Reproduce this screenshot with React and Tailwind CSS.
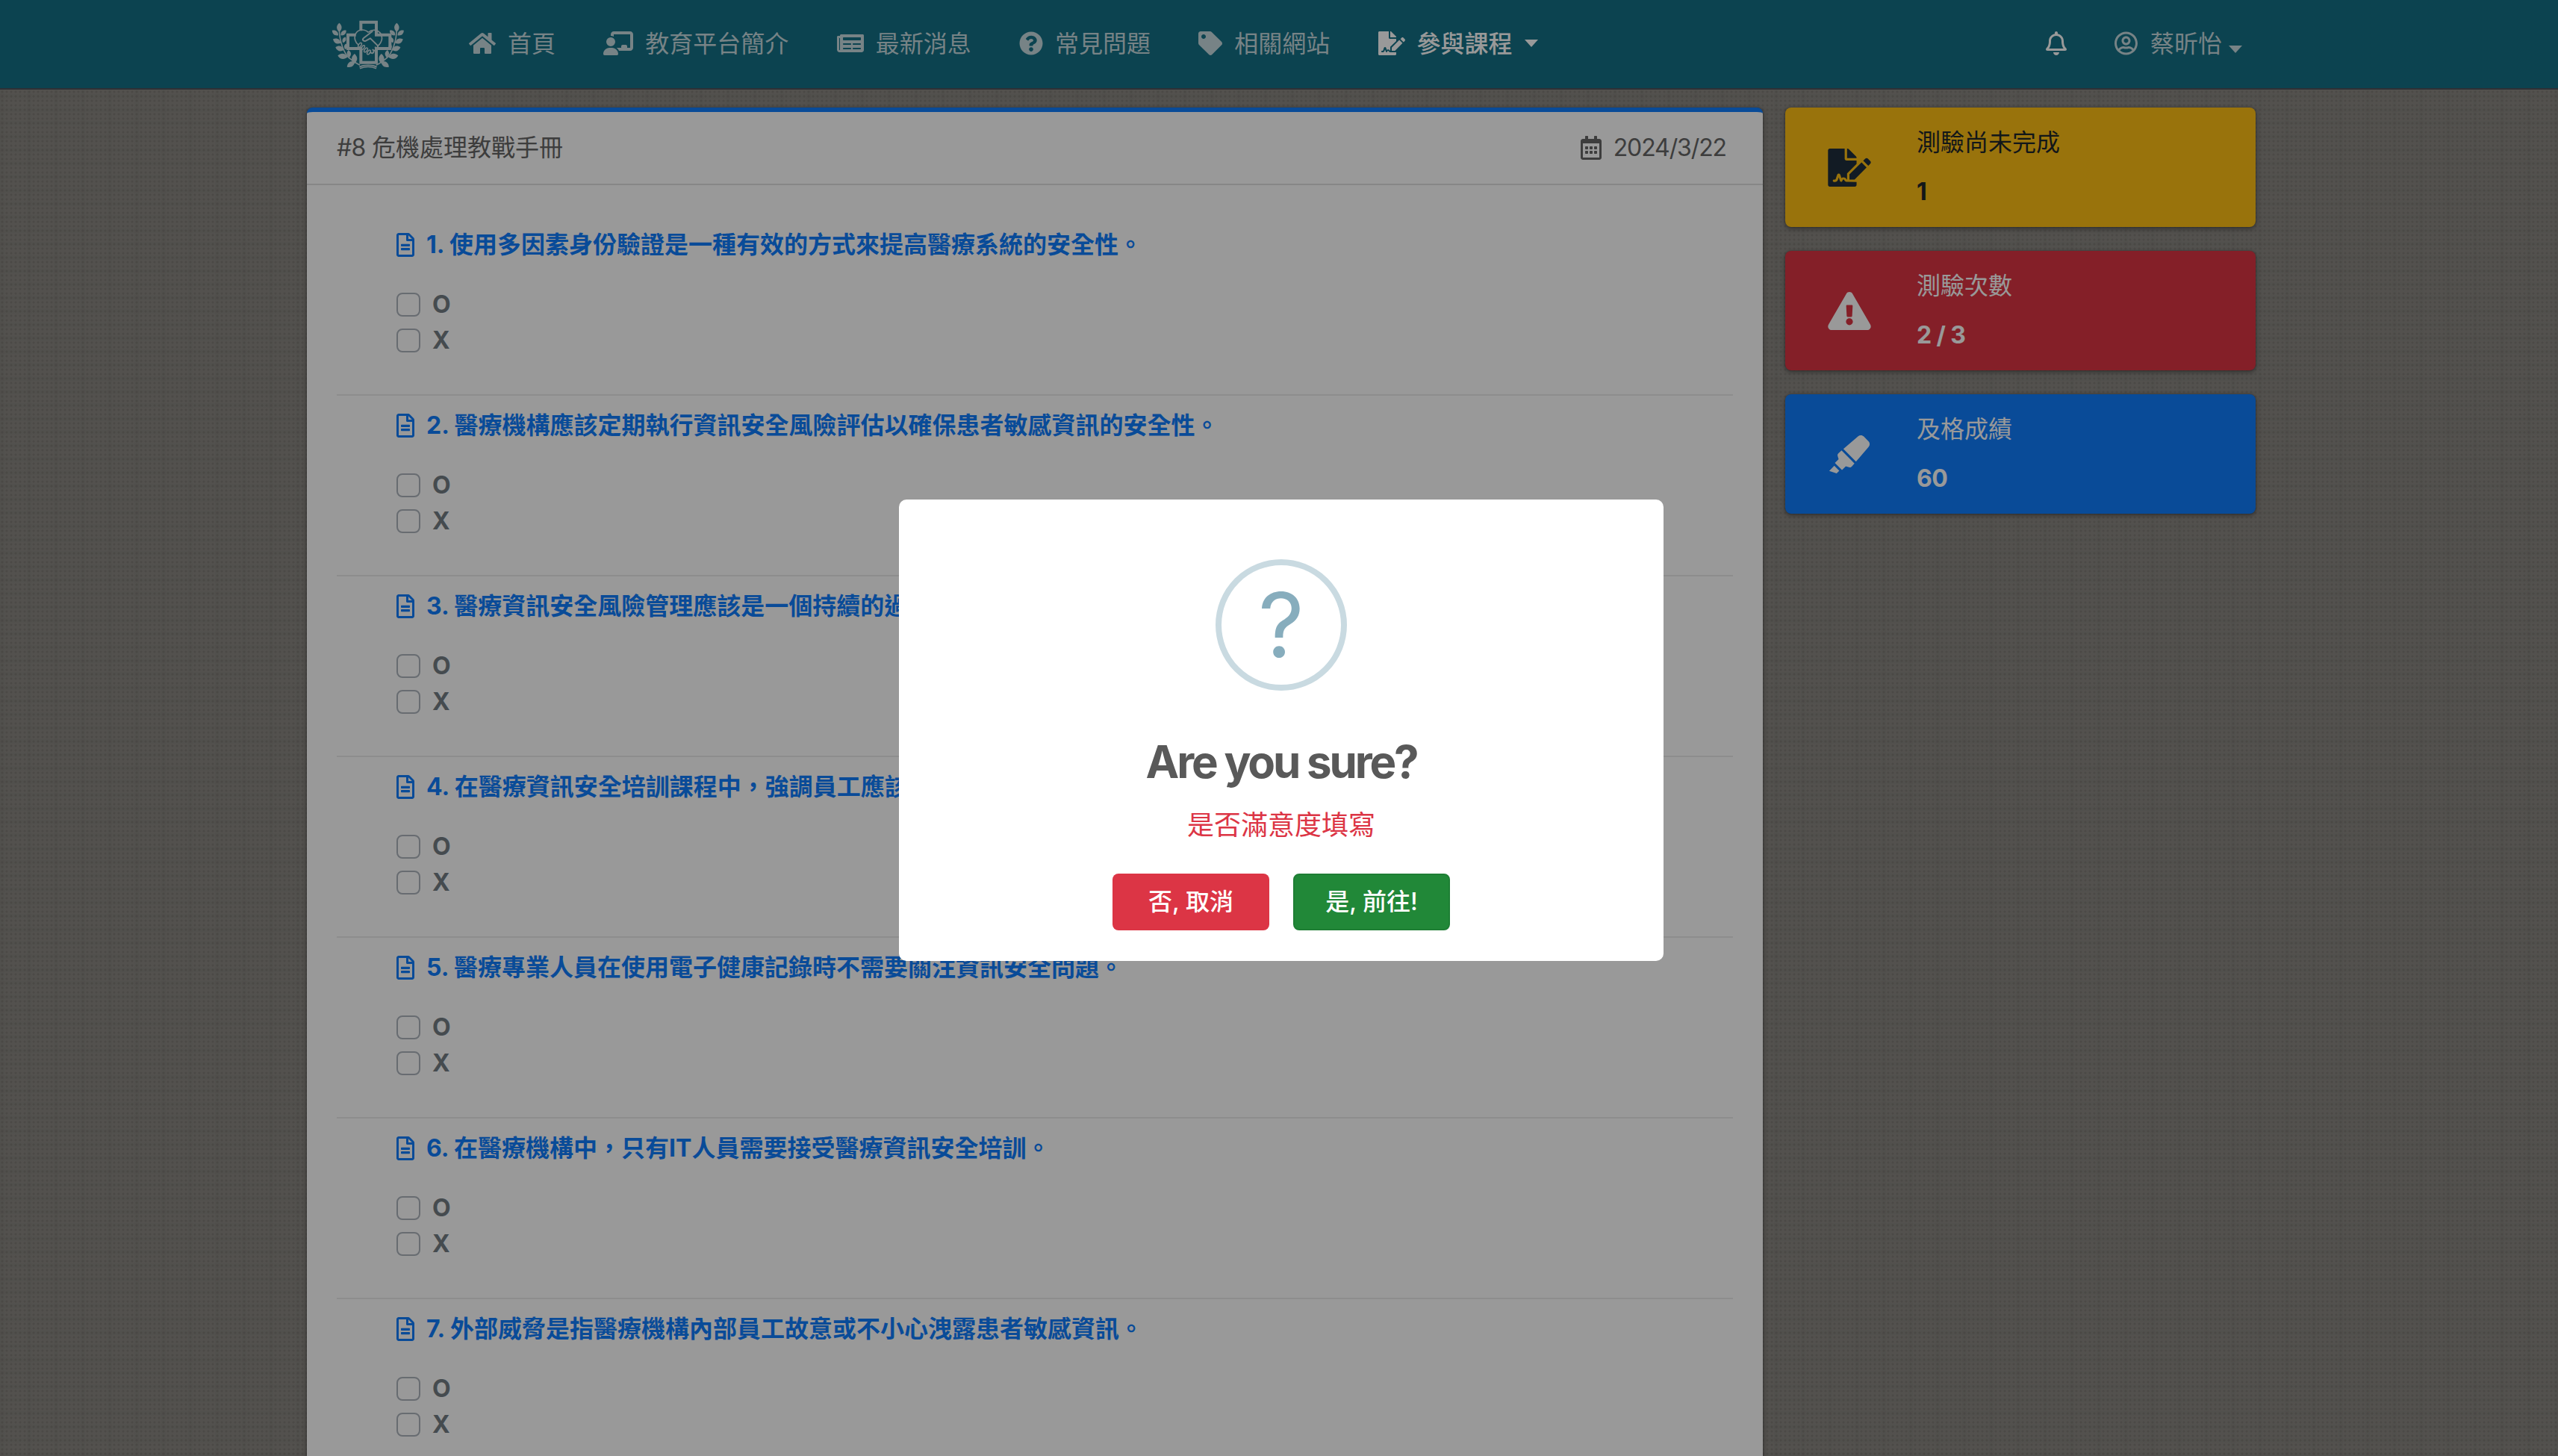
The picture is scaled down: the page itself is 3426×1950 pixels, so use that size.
import React from "react";
import {
  FaHome, FaNewspaper, FaQuestionCircle, FaTag, FaFileSignature, FaRegBell,
  FaRegUserCircle, FaRegCalendarAlt, FaRegFileAlt, FaExclamationTriangle, FaHighlighter,
} from "react-icons/fa";
import { FaChalkboardUser } from "react-icons/fa6";

const navItems = [
  { label: "首頁", Icon: FaHome, size: "w-9" },
  { label: "教育平台簡介", Icon: FaChalkboardUser, size: "w-10" },
  { label: "最新消息", Icon: FaNewspaper, size: "w-9" },
  { label: "常見問題", Icon: FaQuestionCircle, size: "w-8" },
  { label: "相關網站", Icon: FaTag, size: "w-8" },
];

const questions = [
  "使用多因素身份驗證是一種有效的方式來提高醫療系統的安全性。",
  "醫療機構應該定期執行資訊安全風險評估以確保患者敏感資訊的安全性。",
  "醫療資訊安全風險管理應該是一個持續的過程。",
  "在醫療資訊安全培訓課程中，強調員工應該定期更新密碼。",
  "醫療專業人員在使用電子健康記錄時不需要關注資訊安全問題。",
  "在醫療機構中，只有IT人員需要接受醫療資訊安全培訓。",
  "外部威脅是指醫療機構內部員工故意或不小心洩露患者敏感資訊。",
];

const stats = [
  { title: "測驗尚未完成", value: "1", Icon: FaFileSignature, tone: "bg-[#ffc014] text-[#1f2d3d]", text: "text-[#1f272b]" },
  { title: "測驗次數", value: "2 / 3", Icon: FaExclamationTriangle, tone: "bg-[#dc3544] text-white", text: "text-white" },
  { title: "及格成績", value: "60", Icon: FaHighlighter, tone: "bg-[#0f7dfd] text-white", text: "text-white" },
];

// [x, y, rotation, length] of each laurel leaf on the left branch
const leaves = [
  [73, 62, 0, 17], [57, 84, -52, 15], [90, 84, 48, 14],
  [64, 117, -62, 17], [93, 112, 25, 12],
  [75, 147, -72, 17], [99, 139, 5, 11],
  [87, 178, -82, 19], [112, 168, -8, 14],
  [120, 210, -125, 18], [134, 188, 2, 19],
];

// [x, y] of each finger in the handshake
const fingers = [[156, 133], [168, 143], [180, 153], [192, 162]];

function Laurel() {
  return (
    <g>
      <path d="M73 70C74 120 92 165 112 184C128 198 140 206 156 214" fill="none" stroke="currentColor" strokeWidth="5" />
      {leaves.map(([x, y, r, l]) => (
        <path
          key={`${x}-${y}`}
          transform={`translate(${x} ${y}) rotate(${r}) scale(${l / 17})`}
          d="M0 -18C12 -8 14 6 0 18C-14 6 -12 -8 0 -18Z"
        />
      ))}
    </g>
  );
}

function Logo() {
  return (
    <svg viewBox="42 30 294 201" className="h-[67px] w-[98px]" fill="currentColor">
      <Laurel />
      <g transform="translate(377 0) scale(-1 1)"><Laurel /></g>
      <path
        d="M160 76V41H222V92H277V147H222V203H160V147H108V92H140"
        fill="none" stroke="currentColor" strokeWidth="12"
      />
      <path
        d="M190 82C176 68 150 68 140 86C130 104 138 124 152 134M190 82C206 68 228 70 240 88C250 106 242 126 228 136"
        fill="none" stroke="currentColor" strokeWidth="5"
      />
      <path
        d="M206 78L170 106C164 112 172 120 180 116L198 106L226 134C232 140 224 148 218 142M222 146C222 154 214 158 208 152M212 156C212 166 204 168 198 162"
        fill="none" stroke="currentColor" strokeWidth="6" strokeLinecap="round" strokeLinejoin="round"
      />
      {fingers.map(([x, y]) => (
        <ellipse
          key={x} cx={x} cy={y} rx="5" ry="10" transform={`rotate(35 ${x} ${y})`}
          fill="none" stroke="currentColor" strokeWidth="4.5"
        />
      ))}
      <path d="M154 221C172 212 206 212 224 221M156 227C176 219 202 219 222 227" fill="none" stroke="currentColor" strokeWidth="5" />
    </svg>
  );
}

function Caret({ className }) {
  return (
    <svg viewBox="0 0 18 10" className={className} fill="currentColor">
      <path d="M0 0H18L9 10Z" />
    </svg>
  );
}

function Navbar() {
  return (
    <nav className="flex h-[120px] items-center border-b-2 border-[#4b525a] bg-[#147085] pr-[423px] pl-[444px] text-[#c6dadf]">
      <Logo />
      <div className="ml-[86px] flex items-center gap-[64.3px]">
        {navItems.map(({ label, Icon, size }) => (
          <a key={label} className="flex items-center gap-4">
            <Icon className={`-mt-0.5 h-8 ${size}`} />
            <span>{label}</span>
          </a>
        ))}
        <a className="flex items-center gap-4 text-white">
          <FaFileSignature className="-mt-0.5 h-8 w-9" />
          <span className="font-medium">參與課程</span>
          <Caret className="-mt-0.5 h-2.5 w-[18px]" />
        </a>
      </div>
      <div className="ml-auto flex items-center">
        <FaRegBell className="-mt-0.5 h-8 w-7 text-white" />
        <a className="ml-16 flex items-center">
          <FaRegUserCircle className="-mt-0.5 h-8 w-[31px]" />
          <span className="ml-[17px]">蔡昕怡</span>
          <Caret className="mt-3.5 ml-[9px] h-2.5 w-[18px]" />
        </a>
      </div>
    </nav>
  );
}

function Question({ number, text }) {
  return (
    <section className="h-[242px] border-b-2 border-[#ebebeb] px-20 pt-4">
      <h3 className="flex h-12 items-center gap-4 font-bold whitespace-pre text-[#0f7dfd]">
        <FaRegFileAlt className="h-8 w-6" />
        <span>{number}. {text}</span>
      </h3>
      <div className="mt-8 flex flex-col">
        {["O", "X"].map((option) => (
          <label key={option} className="flex h-12 items-center gap-4 font-bold text-[#747d84]">
            <span className="size-8 rounded-lg border-2 border-[#adb5bd]" />
            {option}
          </label>
        ))}
      </div>
    </section>
  );
}

function Quiz() {
  return (
    <main className="w-[1950px] rounded-lg border-t-[6px] border-[#0f7dfd] bg-white shadow-[0_0_2px_rgba(0,0,0,0.25),0_2px_6px_rgba(0,0,0,0.4)]">
      <header className="flex h-[98px] items-center justify-between border-b-2 border-[#dfdfdf] px-10 pr-12 text-[#676767]">
        <span><span className="tracking-[-0.7px]">#8 </span>危機處理教戰手冊</span>
        <span className="flex items-center gap-4">
          <FaRegCalendarAlt className="h-8 w-7" />
          <span className="mr-px tracking-[-1.1px]">2024/3/22</span>
        </span>
      </header>
      <div className="px-10 pt-10">
        {questions.map((text, i) => (
          <Question key={text} number={i + 1} text={text} />
        ))}
      </div>
    </main>
  );
}

function Sidebar() {
  return (
    <aside className="flex w-[630px] flex-col gap-8">
      {stats.map(({ title, value, Icon, tone, text }) => (
        <div key={title} className={`flex h-40 items-center rounded-lg px-4 shadow-[0_0_2px_rgba(0,0,0,0.25),0_2px_6px_rgba(0,0,0,0.4)] ${tone}`}>
          <span className="flex w-[140px] justify-center">
            <Icon className="h-[51px] w-[58px]" />
          </span>
          <div className={`flex flex-col gap-[18px] pl-5 ${text}`}>
            <span className="leading-[48px]">{title}</span>
            <span className="leading-[48px] font-bold tracking-[-0.6px]">{value}</span>
          </div>
        </div>
      ))}
    </aside>
  );
}

function ConfirmDialog() {
  return (
    <div className="absolute inset-0 flex items-center justify-center bg-black/40 pt-1.5 pl-1.5">
      <div role="dialog" className="flex h-[618px] w-[1024px] flex-col items-center rounded-[10px] bg-white pt-20">
        <div className="flex size-44 items-center justify-center rounded-full border-8 border-[#c9dae1] text-[120px] leading-none text-[#87adbd]">
          ?
        </div>
        <h2 className="mt-[57px] text-[60px] leading-[76px] font-bold tracking-[-3.2px] text-[#595959]">Are you sure?</h2>
        <p className="mt-5 text-[36px] leading-[54px] text-[#dc3545]">是否滿意度填寫</p>
        <div className="mt-[38px] flex gap-8 text-white">
          <button className="h-[76px] w-[210px] rounded-lg bg-[#dc3545] font-medium">否, 取消</button>
          <button className="h-[76px] w-[210px] rounded-lg border-2 border-[#1e7e34] bg-[#218838] font-medium">是, 前往!</button>
        </div>
      </div>
    </div>
  );
}

export default function App() {
  return (
    <div className="relative h-[1950px] w-[3426px] overflow-hidden bg-[#8a8782] bg-[radial-gradient(circle,rgba(0,0,0,0.09)_1px,transparent_2px),linear-gradient(90deg,rgba(0,0,0,0.012)_6px,transparent_6px),linear-gradient(rgba(0,0,0,0.012)_6px,transparent_6px)] bg-[length:6px_6px,36px_36px,18px_18px] font-['Inter','Noto_Sans_CJK_TC',sans-serif] text-[32px] leading-[48px]">
      <Navbar />
      <div className="flex items-start gap-[30px] pt-6 pl-[411px]">
        <Quiz />
        <Sidebar />
      </div>
      <ConfirmDialog />
    </div>
  );
}
